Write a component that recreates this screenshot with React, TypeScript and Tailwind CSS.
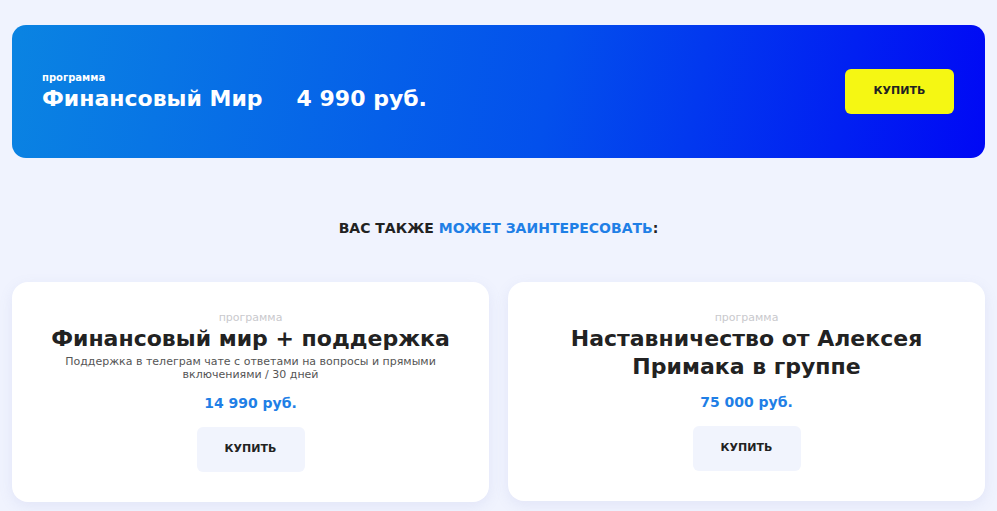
const font = { fontFamily: '"DejaVu Sans", "Noto Sans", sans-serif' };

type Offer = {
  title: string;
  description?: string;
  price: string;
};

const offers: Offer[] = [
  {
    title: "Финансовый мир + поддержка",
    description:
      "Поддержка в телеграм чате с ответами на вопросы и прямыми включениями / 30 дней",
    price: "14 990 руб.",
  },
  {
    title: "Наставничество от Алексея Примака в группе",
    price: "75 000 руб.",
  },
];

function OfferCard({ offer }: { offer: Offer }) {
  return (
    <div className="flex flex-col items-center rounded-[16px] bg-white px-6 pb-[30px] pt-[29px] text-center shadow-[0_4px_14px_rgba(120,130,200,0.12)]">
      <div className="text-[11px] leading-[14px] text-[#c9c9cd]">программа</div>
      <h3 className="max-w-[400px] text-[22px] font-semibold leading-[28px] text-[#222222]">
        {offer.title}
      </h3>
      {offer.description && (
        <p className="mt-[2px] max-w-[400px] text-[11px] leading-[13px] text-[#555555]">
          {offer.description}
        </p>
      )}
      <div
        className={
          offer.description
            ? "mt-[13px] text-[14px] font-bold leading-[18px] text-[#1f7fe6]"
            : "mt-[12px] text-[14px] font-bold leading-[18px] text-[#1f7fe6]"
        }
      >
        {offer.price}
      </div>
      <button className="mt-[15px] h-[45px] w-[108px] rounded-[6px] bg-[#f1f4fd] text-[11px] font-bold text-[#222222]">
        КУПИТЬ
      </button>
    </div>
  );
}

export default function App() {
  return (
    <div className="min-h-[511px] bg-[#f0f3fe] px-3 pt-[25px]" style={font}>
      <div className="flex h-[133px] items-center justify-between rounded-[14px] bg-[linear-gradient(100deg,#0a84e2_0%,#0350ec_55%,#0008f5_100%)] pl-[30px] pr-[31px]">
        <div className="flex flex-col text-white">
          <div className="text-[10px] font-semibold leading-[12px]">программа</div>
          <div className="mt-[2px] flex gap-[34px] text-[22px] font-bold leading-[26px]">
            <span>Финансовый Мир</span>
            <span>4 990 руб.</span>
          </div>
        </div>
        <button className="h-[45px] w-[109px] rounded-[6px] bg-[#f5f713] text-[11px] font-semibold text-[#222222]">
          КУПИТЬ
        </button>
      </div>

      <h2 className="mt-[61px] text-center text-[14px] font-bold leading-[18px] text-[#222222]">
        ВАС ТАКЖЕ <span className="text-[#1f7fe6]">МОЖЕТ ЗАИНТЕРЕСОВАТЬ</span>:
      </h2>

      <div className="mt-[45px] grid grid-cols-2 items-start gap-[19px]">
        {offers.map((offer) => (
          <OfferCard key={offer.title} offer={offer} />
        ))}
      </div>
    </div>
  );
}
